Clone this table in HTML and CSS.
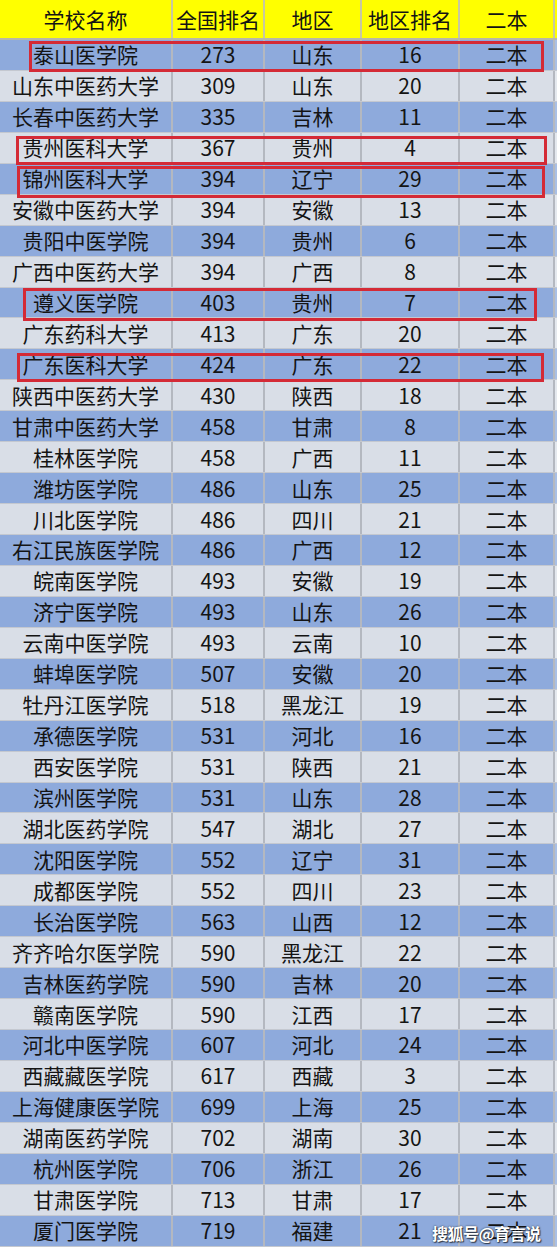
FILE: index.html
```html
<!DOCTYPE html>
<html lang="zh">
<head>
<meta charset="utf-8">
<link rel="stylesheet" href="styles.css">
</head>
<body>
<div class="sheet">
  <div class="row head"><div>学校名称</div><div>全国排名</div><div>地区</div><div>地区排名</div><div>二本</div><div></div></div>
  <div class="row blue mark m1"><div>泰山医学院</div><div>273</div><div>山东</div><div>16</div><div>二本</div><div></div></div>
  <div class="row gray"><div>山东中医药大学</div><div>309</div><div>山东</div><div>20</div><div>二本</div><div></div></div>
  <div class="row blue"><div>长春中医药大学</div><div>335</div><div>吉林</div><div>11</div><div>二本</div><div></div></div>
  <div class="row gray mark m4"><div>贵州医科大学</div><div>367</div><div>贵州</div><div>4</div><div>二本</div><div></div></div>
  <div class="row blue mark m5"><div>锦州医科大学</div><div>394</div><div>辽宁</div><div>29</div><div>二本</div><div></div></div>
  <div class="row gray"><div>安徽中医药大学</div><div>394</div><div>安徽</div><div>13</div><div>二本</div><div></div></div>
  <div class="row blue"><div>贵阳中医学院</div><div>394</div><div>贵州</div><div>6</div><div>二本</div><div></div></div>
  <div class="row gray"><div>广西中医药大学</div><div>394</div><div>广西</div><div>8</div><div>二本</div><div></div></div>
  <div class="row blue mark m9"><div>遵义医学院</div><div>403</div><div>贵州</div><div>7</div><div>二本</div><div></div></div>
  <div class="row gray"><div>广东药科大学</div><div>413</div><div>广东</div><div>20</div><div>二本</div><div></div></div>
  <div class="row blue mark m11"><div>广东医科大学</div><div>424</div><div>广东</div><div>22</div><div>二本</div><div></div></div>
  <div class="row gray"><div>陕西中医药大学</div><div>430</div><div>陕西</div><div>18</div><div>二本</div><div></div></div>
  <div class="row blue"><div>甘肃中医药大学</div><div>458</div><div>甘肃</div><div>8</div><div>二本</div><div></div></div>
  <div class="row gray"><div>桂林医学院</div><div>458</div><div>广西</div><div>11</div><div>二本</div><div></div></div>
  <div class="row blue"><div>潍坊医学院</div><div>486</div><div>山东</div><div>25</div><div>二本</div><div></div></div>
  <div class="row gray"><div>川北医学院</div><div>486</div><div>四川</div><div>21</div><div>二本</div><div></div></div>
  <div class="row blue"><div>右江民族医学院</div><div>486</div><div>广西</div><div>12</div><div>二本</div><div></div></div>
  <div class="row gray"><div>皖南医学院</div><div>493</div><div>安徽</div><div>19</div><div>二本</div><div></div></div>
  <div class="row blue"><div>济宁医学院</div><div>493</div><div>山东</div><div>26</div><div>二本</div><div></div></div>
  <div class="row gray"><div>云南中医学院</div><div>493</div><div>云南</div><div>10</div><div>二本</div><div></div></div>
  <div class="row blue"><div>蚌埠医学院</div><div>507</div><div>安徽</div><div>20</div><div>二本</div><div></div></div>
  <div class="row gray"><div>牡丹江医学院</div><div>518</div><div>黑龙江</div><div>19</div><div>二本</div><div></div></div>
  <div class="row blue"><div>承德医学院</div><div>531</div><div>河北</div><div>16</div><div>二本</div><div></div></div>
  <div class="row gray"><div>西安医学院</div><div>531</div><div>陕西</div><div>21</div><div>二本</div><div></div></div>
  <div class="row blue"><div>滨州医学院</div><div>531</div><div>山东</div><div>28</div><div>二本</div><div></div></div>
  <div class="row gray"><div>湖北医药学院</div><div>547</div><div>湖北</div><div>27</div><div>二本</div><div></div></div>
  <div class="row blue"><div>沈阳医学院</div><div>552</div><div>辽宁</div><div>31</div><div>二本</div><div></div></div>
  <div class="row gray"><div>成都医学院</div><div>552</div><div>四川</div><div>23</div><div>二本</div><div></div></div>
  <div class="row blue"><div>长治医学院</div><div>563</div><div>山西</div><div>12</div><div>二本</div><div></div></div>
  <div class="row gray"><div>齐齐哈尔医学院</div><div>590</div><div>黑龙江</div><div>22</div><div>二本</div><div></div></div>
  <div class="row blue"><div>吉林医药学院</div><div>590</div><div>吉林</div><div>20</div><div>二本</div><div></div></div>
  <div class="row gray"><div>赣南医学院</div><div>590</div><div>江西</div><div>17</div><div>二本</div><div></div></div>
  <div class="row blue"><div>河北中医学院</div><div>607</div><div>河北</div><div>24</div><div>二本</div><div></div></div>
  <div class="row gray"><div>西藏藏医学院</div><div>617</div><div>西藏</div><div>3</div><div>二本</div><div></div></div>
  <div class="row blue"><div>上海健康医学院</div><div>699</div><div>上海</div><div>25</div><div>二本</div><div></div></div>
  <div class="row gray"><div>湖南医药学院</div><div>702</div><div>湖南</div><div>30</div><div>二本</div><div></div></div>
  <div class="row blue"><div>杭州医学院</div><div>706</div><div>浙江</div><div>26</div><div>二本</div><div></div></div>
  <div class="row gray"><div>甘肃医学院</div><div>713</div><div>甘肃</div><div>17</div><div>二本</div><div></div></div>
  <div class="row blue last"><div>厦门医学院</div><div>719</div><div>福建</div><div>21</div><div>二本</div><div></div><span class="watermark">搜狐号@育言说</span></div>
</div>
</body>
</html>
```

FILE: styles.css
```css
html, body {
  margin: 0;
  padding: 0;
  background: #ffffff;
}
body {
  width: 557px;
  height: 1253px;
  overflow: hidden;
  font-family: "Noto Sans CJK SC", "Noto Sans", sans-serif;
  color: #141414;
}
.sheet {
  display: flex;
  flex-direction: column;
  width: 557px;
}
.row {
  position: relative;
  display: grid;
  grid-template-columns: 173px 92px 97px 98px 95px 2px;
  height: 30.95px;
  box-sizing: border-box;
  border-bottom: 1px solid #c4c8d0;
}
.row > div {
  display: flex;
  align-items: center;
  justify-content: center;
  font-size: 21px;
  line-height: 1;
  border-right: 2px solid #b4b8c0;
  box-sizing: border-box;
  white-space: nowrap;
}
.row > div:last-of-type {
  border-right: none;
}
.head {
  height: 40px;
  background: #ffff00;
  border-bottom: 2px solid #b8b8a8;
}
.head > div {
  border-right-color: #c8c8a0;
}
.blue {
  background: #8eaadc;
}
.gray {
  background: #d9dee7;
}
.blue > div:last-of-type {
  background: #a9bfe4;
}
.gray > div:last-of-type {
  background: #e4e8ee;
}
.mark::after {
  content: "";
  position: absolute;
  z-index: 5;
  border: 3px solid #d42a36;
  box-sizing: border-box;
  pointer-events: none;
}
.m1::after { left: 29px; right: 13px; top: 1px; bottom: -2px; }
.m4::after { left: 16px; right: 10px; top: 3px; bottom: -2px; }
.m5::after { left: 17px; right: 12px; top: 2px; bottom: -4px; }
.m9::after { left: 23px; right: 20px; top: 0px; bottom: -4px; }
.m11::after { left: 17px; right: 13px; top: 4px; bottom: -3px; }
.watermark {
  position: absolute;
  z-index: 5;
  left: 432px;
  top: 5px;
  font-size: 16px;
  font-weight: 700;
  color: #ffffff;
  letter-spacing: -0.5px;
  text-shadow: 0 0 2px rgba(0,0,0,0.7), 1px 1px 1px rgba(0,0,0,0.6);
  white-space: nowrap;
}
```
